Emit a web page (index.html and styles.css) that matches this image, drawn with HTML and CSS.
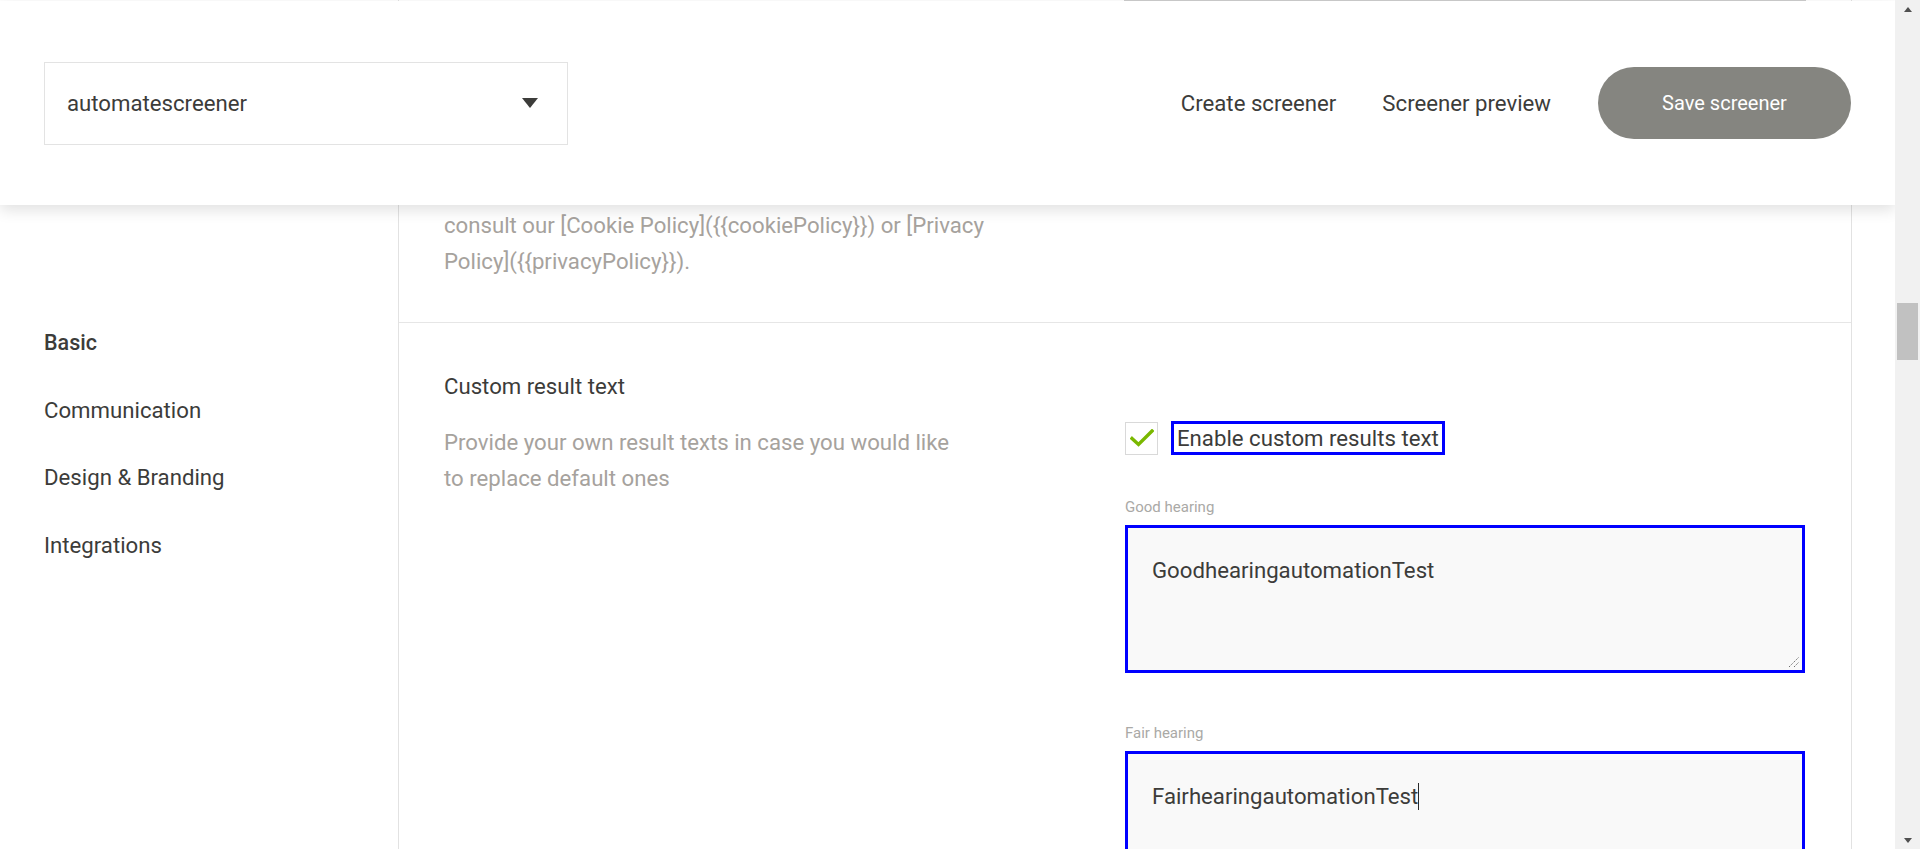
FILE: index.html
```html
<!DOCTYPE html>
<html lang="en">
<head>
<meta charset="utf-8">
<title>Screener settings</title>
<link rel="stylesheet" href="styles.css">
</head>
<body>
<div class="window">
  <div class="viewport">
    <div class="page">
      <aside class="sidebar">
        <nav class="side-nav">
          <a class="side-link active">Basic</a>
          <a class="side-link">Communication</a>
          <a class="side-link">Design &amp; Branding</a>
          <a class="side-link">Integrations</a>
        </nav>
      </aside>
      <main class="panel">
        <section class="setting setting-top">
          <div class="setting-info">
            <p class="desc desc-top">consult our [Cookie Policy]({{cookiePolicy}}) or [Privacy Policy]({{privacyPolicy}}).</p>
          </div>
          <div class="setting-control">
            <div class="prev-input"></div>
          </div>
        </section>
        <section class="setting">
          <div class="setting-info">
            <h3 class="setting-title">Custom result text</h3>
            <p class="desc desc-main">Provide your own result texts in case you would like to replace default ones</p>
          </div>
          <div class="setting-control control-main">
            <div class="check-row">
              <span class="checkbox">
                <svg width="24" height="18" viewBox="0 0 24 18"><path d="M2 9.5 L8.5 15.5 L22 2" fill="none" stroke="#7ab800" stroke-width="3.4" stroke-linecap="square"/></svg>
              </span>
              <span class="check-label">Enable custom results text</span>
            </div>
            <label class="field-label">Good hearing</label>
            <div class="textarea">GoodhearingautomationTest
              <svg class="grip" width="12" height="12" viewBox="0 0 12 12"><path d="M1 11 L11 1 M6 11 L11 6" stroke="#6e6e6e" stroke-width="1" stroke-dasharray="1.4 1" fill="none"/></svg>
            </div>
            <label class="field-label field-label-2">Fair hearing</label>
            <div class="textarea">FairhearingautomationTest<span class="caret"></span></div>
          </div>
        </section>
      </main>
    </div>
    <header class="topbar">
      <div class="select">
        <span class="select-value">automatescreener</span>
        <span class="select-caret"></span>
      </div>
      <div class="top-actions">
        <a class="top-link">Create screener</a>
        <a class="top-link">Screener preview</a>
        <button class="save-btn">Save screener</button>
      </div>
    </header>
  </div>
  <div class="scrollbar">
    <div class="sb-btn"><span class="sb-up"></span></div>
    <div class="sb-track"><div class="sb-thumb"></div></div>
    <div class="sb-btn"><span class="sb-down"></span></div>
  </div>
</div>
</body>
</html>
```

FILE: styles.css
```css
* { box-sizing: border-box; }

html, body {
  margin: 0;
  padding: 0;
  background: #fff;
}

body {
  font-family: Roboto, "Liberation Sans", Arial, sans-serif;
  color: #3c3c3a;
  font-size: 22.2px;
}

.window {
  display: flex;
  width: 1920px;
  height: 849px;
  overflow: hidden;
}

.viewport {
  position: relative;
  width: 1895px;
  height: 849px;
  overflow: hidden;
  background: #fff;
}

.page {
  display: flex;
  align-items: flex-start;
}

/* Sidebar */
.sidebar {
  flex: none;
  width: 398px;
}

.side-nav {
  display: flex;
  flex-direction: column;
  padding: 309px 0 0 44px;
}

.side-link {
  height: 67.6px;
  line-height: 67.6px;
  font-size: 22.2px;
  color: #3c3c3a;
}

.side-link.active {
  font-weight: 500;
  font-size: 21.5px;
}

/* Panel */
.panel {
  flex: none;
  width: 1454px;
  min-height: 900px;
  border-left: 1px solid #e2e2e2;
  border-right: 1px solid #e2e2e2;
}

.setting {
  display: grid;
  grid-template-columns: 1fr 680px;
  column-gap: 46px;
  padding: 45px 46px 0 45px;
}

.setting + .setting {
  border-top: 1px solid #e6e6e6;
}

.setting-top {
  height: 322px;
  padding-top: 0;
}

.prev-input {
  border-top: 1px solid #cdcdcd;
  margin: 0 -1px;
}

.desc {
  margin: 20px 0 0;
  font-size: 22.2px;
  line-height: 36px;
  color: #a6a29d;
}

.desc-top {
  margin-top: 207px;
  max-width: 560px;
}

.desc-main {
  max-width: 528px;
}

.setting-title {
  margin: 0;
  font-size: 22.2px;
  line-height: 36px;
  font-weight: 400;
  color: #3c3c3a;
}

.control-main {
  padding-top: 53px;
}

.check-row {
  display: flex;
  align-items: center;
  gap: 13px;
  height: 34px;
}

.checkbox {
  width: 33px;
  height: 33px;
  border: 1px solid #d9d9d9;
  display: grid;
  place-items: center;
  background: #fff;
}

.checkbox svg {
  display: block;
}

.check-label {
  border: 3px solid #0000ff;
  padding: 0 3px;
  line-height: 28px;
  font-size: 22.2px;
  color: #3c3c3a;
}

.field-label {
  display: block;
  margin-top: 43px;
  font-size: 15px;
  line-height: 18px;
  color: #aaa9a6;
}

.field-label-2 {
  margin-top: 51px;
}

.textarea {
  position: relative;
  margin-top: 9px;
  height: 148px;
  border: 3px solid #0000ff;
  background: #f9f9f9;
  padding: 24px 24px;
  font-size: 22.2px;
  line-height: 36px;
  color: #3c3c3a;
}

.grip {
  position: absolute;
  right: 2px;
  bottom: 2px;
}

.caret {
  display: inline-block;
  width: 1px;
  height: 27px;
  background: #2a2a2a;
  vertical-align: -6px;
}

/* Header */
.topbar {
  position: absolute;
  top: 1px;
  left: 0;
  right: 0;
  height: 204px;
  background: #fff;
  box-shadow: 0 5px 14px rgba(0, 0, 0, 0.12);
  display: flex;
  align-items: center;
  padding: 0 44px;
}

.select {
  width: 524px;
  height: 83px;
  border: 1px solid #e3e3e3;
  display: flex;
  align-items: center;
  justify-content: space-between;
  padding: 0 29px 0 22px;
  font-size: 22.2px;
}

.select-caret {
  width: 0;
  height: 0;
  border-left: 8px solid transparent;
  border-right: 8px solid transparent;
  border-top: 10px solid #3c3c3a;
}

.top-actions {
  margin-left: auto;
  display: flex;
  align-items: center;
}

.top-link {
  font-size: 22.2px;
  color: #3c3c3a;
  margin-right: 46px;
}

.top-link + .top-link {
  margin-right: 47px;
}

.save-btn {
  width: 253px;
  height: 72px;
  border: none;
  border-radius: 36px;
  background: #858580;
  color: #fff;
  font-family: inherit;
  font-size: 20px;
}

/* Scrollbar */
.scrollbar {
  flex: none;
  width: 25px;
  height: 849px;
  background: #f1f1f1;
  display: flex;
  flex-direction: column;
}

.sb-btn {
  height: 18px;
  display: grid;
  place-items: center;
}

.sb-up {
  width: 0;
  height: 0;
  border-left: 4px solid transparent;
  border-right: 4px solid transparent;
  border-bottom: 5px solid #505050;
}

.sb-down {
  width: 0;
  height: 0;
  border-left: 4px solid transparent;
  border-right: 4px solid transparent;
  border-top: 5px solid #505050;
}

.sb-track {
  flex: 1;
  padding: 285px 2px 0;
}

.sb-thumb {
  height: 57px;
  background: #c1c1c1;
}
```
